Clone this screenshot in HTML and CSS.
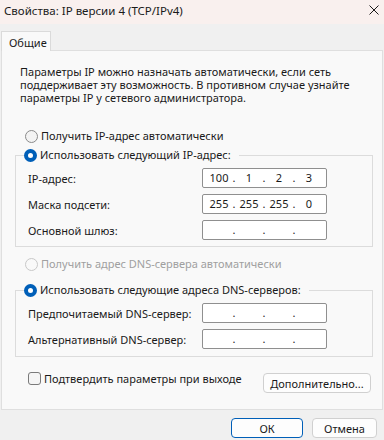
FILE: index.html
```html
<!DOCTYPE html>
<html lang="ru">
<head>
    <meta charset="UTF-8">
    <title>Свойства: IP версии 4 (TCP/IPv4)</title>
    <link rel="stylesheet" href="styles.css">
</head>
<body>
    <div class="window">
        <div class="titlebar">
            <span class="title">Свойства: IP версии 4 (TCP/IPv4)</span>
            <svg class="close" width="10" height="10" viewBox="0 0 10 10">
                <path d="M0.5 0.5 L9.5 9.5 M9.5 0.5 L0.5 9.5" stroke="#1a1a1a" stroke-width="1" fill="none"/>
            </svg>
        </div>

        <div class="tabs">
            <div class="tab">Общие</div>
        </div>

        <div class="panel">
            <p class="desc">Параметры IP можно назначать автоматически, если сеть поддерживает эту возможность. В противном случае узнайте параметры IP у сетевого администратора.</p>

            <label class="radio-row first">
                <span class="radio"></span>Получить IP-адрес автоматически
            </label>

            <fieldset class="group">
                <legend class="radio-row"><span class="radio checked"></span>Использовать следующий IP-адрес:</legend>
                <div class="fields">
                    <div class="field">
                        <span>IP-адрес:</span>
                        <div class="ip"><span class="seg">100</span><span class="dot">.</span><span class="seg">1</span><span class="dot">.</span><span class="seg">2</span><span class="dot">.</span><span class="seg">3</span></div>
                    </div>
                    <div class="field">
                        <span>Маска подсети:</span>
                        <div class="ip"><span class="seg">255</span><span class="dot">.</span><span class="seg">255</span><span class="dot">.</span><span class="seg">255</span><span class="dot">.</span><span class="seg">0</span></div>
                    </div>
                    <div class="field">
                        <span>Основной шлюз:</span>
                        <div class="ip"><span class="seg"></span><span class="dot">.</span><span class="seg"></span><span class="dot">.</span><span class="seg"></span><span class="dot">.</span><span class="seg"></span></div>
                    </div>
                </div>
            </fieldset>

            <label class="radio-row disabled second">
                <span class="radio"></span>Получить адрес DNS-сервера автоматически
            </label>

            <fieldset class="group dns">
                <legend class="radio-row"><span class="radio checked"></span>Использовать следующие адреса DNS-серверов:</legend>
                <div class="fields">
                    <div class="field">
                        <span>Предпочитаемый DNS-сервер:</span>
                        <div class="ip"><span class="seg"></span><span class="dot">.</span><span class="seg"></span><span class="dot">.</span><span class="seg"></span><span class="dot">.</span><span class="seg"></span></div>
                    </div>
                    <div class="field">
                        <span>Альтернативный DNS-сервер:</span>
                        <div class="ip"><span class="seg"></span><span class="dot">.</span><span class="seg"></span><span class="dot">.</span><span class="seg"></span><span class="dot">.</span><span class="seg"></span></div>
                    </div>
                </div>
            </fieldset>

            <div class="bottom-row">
                <label class="check-row"><span class="checkbox"></span>Подтвердить параметры при выходе</label>
                <button class="btn advanced">Дополнительно...</button>
            </div>
        </div>

        <div class="footer">
            <button class="btn default">ОК</button>
            <button class="btn cancel">Отмена</button>
        </div>
    </div>
</body>
</html>
```

FILE: styles.css
```css
* {
    box-sizing: border-box;
}

body {
    margin: 0;
    font-family: "Noto Sans", "Open Sans", sans-serif;
    font-size: 11px;
    color: #1a1a1a;
    background: #f0f0f0;
}

.window {
    width: 384px;
    height: 440px;
    background: #f0f0f0;
    overflow: hidden;
}

/* title bar */
.titlebar {
    height: 24px;
    background: #f9f0ee;
    display: flex;
    align-items: center;
    justify-content: space-between;
    padding: 0 5px 4px 4px;
    font-size: 11.5px;
}

/* tabs */
.tabs {
    height: 26px;
    padding: 7px 0 0 1px;
}

.tab {
    position: relative;
    width: 50px;
    height: 20px;
    padding: 3px 0 0 7px;
    background: #f9f9f9;
    border: 1px solid #dadada;
    border-bottom: none;
    z-index: 1;
}

.panel {
    height: 360px;
    margin: 0 1px 0 1px;
    background: #f9f9f9;
    border: 1px solid #dfdfdf;
}

.desc {
    margin: 14px 20px 0 18px;
    line-height: 13px;
}

/* radios */
.radio-row {
    display: flex;
    align-items: center;
    height: 16px;
    line-height: 16px;
    white-space: nowrap;
}

.radio-row.first {
    margin: 24px 0 0 23px;
}

.radio-row.second {
    margin: 9px 0 0 23px;
}

.radio-row.disabled {
    color: #a0a0a0;
}

.radio {
    width: 13px;
    height: 13px;
    margin-right: 3px;
    border-radius: 50%;
    border: 1px solid #8a8a8a;
    background: #f3f3f3;
}

.disabled .radio {
    border-color: #c8c8c8;
    background: #f9f9f9;
}

.radio.checked {
    border: 4px solid #005fb8;
    background: #fff;
}

/* group boxes */
.group {
    margin: 3px 9px 0 13px;
    padding: 0 0 6px 0;
    border: 1px solid #dcdcdc;
    min-width: 0;
}

.group legend {
    margin-left: 8px;
    padding: 0 8px 0 0;
}

.group.dns {
    margin-top: 10px;
    padding-bottom: 7px;
}

.fields {
    display: flex;
    flex-direction: column;
    gap: 6px;
    margin-top: 5px;
    padding-left: 12px;
}

.field {
    display: grid;
    grid-template-columns: 174px 125px;
    align-items: center;
    white-space: nowrap;
}

.ip {
    display: flex;
    height: 20px;
    padding-left: 3px;
    background: #fff;
    border: 1px solid #8f8f8f;
    border-radius: 2px;
    line-height: 18px;
}

.seg {
    width: 26px;
    text-align: center;
}

.dot {
    width: 4px;
    text-align: center;
}

/* bottom row */
.bottom-row {
    display: flex;
    justify-content: space-between;
    align-items: flex-start;
    margin: 14px 11px 0 26px;
}

.check-row {
    display: flex;
    align-items: center;
    height: 14px;
}

.checkbox {
    width: 13px;
    height: 13px;
    margin-right: 3px;
    border: 1px solid #7a7a7a;
    border-radius: 3px;
    background: #f5f5f5;
}

.btn {
    height: 20px;
    padding: 0;
    font-family: inherit;
    font-size: 11px;
    color: #1a1a1a;
    background: #fdfdfd;
    border: 1px solid #d0d0d0;
    border-radius: 4px;
}

.btn.advanced {
    width: 108px;
    margin-top: 2px;
}

.footer {
    display: flex;
    justify-content: flex-end;
    gap: 9px;
    padding: 8px 7px 0 0;
}

.btn.default {
    width: 72px;
    border-color: #005fb8;
}

.btn.cancel {
    width: 65px;
}
```
